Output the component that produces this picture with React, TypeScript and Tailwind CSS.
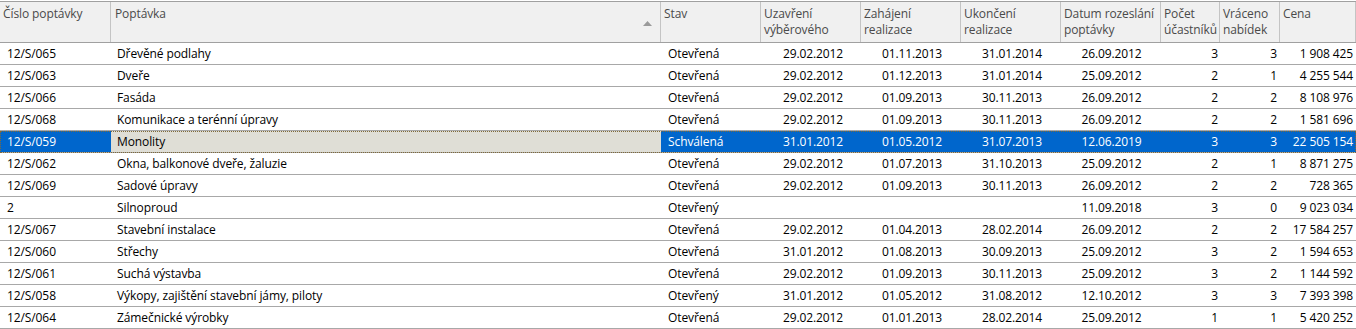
const COLS = [
  { title: ['Číslo poptávky'], w: 'w-[111px]' },
  { title: ['Poptávka'], w: 'w-[550px]', sort: true },
  { title: ['Stav'], w: 'w-[100px]' },
  { title: ['Uzavření', 'výběrového'], w: 'w-[100px]' },
  { title: ['Zahájení', 'realizace'], w: 'w-[100px]' },
  { title: ['Ukončení', 'realizace'], w: 'w-[100px]' },
  { title: ['Datum rozeslání', 'poptávky'], w: 'w-[100px]' },
  { title: ['Počet', 'účastníků'], w: 'w-[59px]' },
  { title: ['Vráceno', 'nabídek'], w: 'w-[60px]' },
  { title: ['Cena'], w: 'w-[76px]' },
];

type Row = [string, string, string, string, string, string, string, string, string, string];

const ROWS: Row[] = [
  ['12/S/065', 'Dřevěné podlahy', 'Otevřená', '29.02.2012', '01.11.2013', '31.01.2014', '26.09.2012', '3', '3', '1 908 425'],
  ['12/S/063', 'Dveře', 'Otevřená', '29.02.2012', '01.12.2013', '31.01.2014', '25.09.2012', '2', '1', '4 255 544'],
  ['12/S/066', 'Fasáda', 'Otevřená', '29.02.2012', '01.09.2013', '30.11.2013', '26.09.2012', '2', '2', '8 108 976'],
  ['12/S/068', 'Komunikace a terénní úpravy', 'Otevřená', '29.02.2012', '01.09.2013', '30.11.2013', '26.09.2012', '2', '2', '1 581 696'],
  ['12/S/059', 'Monolity', 'Schválená', '31.01.2012', '01.05.2012', '31.07.2013', '12.06.2019', '3', '3', '22 505 154'],
  ['12/S/062', 'Okna, balkonové dveře, žaluzie', 'Otevřená', '29.02.2012', '01.07.2013', '31.10.2013', '25.09.2012', '2', '1', '8 871 275'],
  ['12/S/069', 'Sadové úpravy', 'Otevřená', '29.02.2012', '01.09.2013', '30.11.2013', '26.09.2012', '2', '2', '728 365'],
  ['2', 'Silnoproud', 'Otevřený', '', '', '', '11.09.2018', '3', '0', '9 023 034'],
  ['12/S/067', 'Stavební instalace', 'Otevřená', '29.02.2012', '01.04.2013', '28.02.2014', '26.09.2012', '2', '2', '17 584 257'],
  ['12/S/060', 'Střechy', 'Otevřená', '31.01.2012', '01.08.2013', '30.09.2013', '25.09.2012', '3', '2', '1 594 653'],
  ['12/S/061', 'Suchá výstavba', 'Otevřená', '29.02.2012', '01.09.2013', '30.11.2013', '25.09.2012', '3', '2', '1 144 592'],
  ['12/S/058', 'Výkopy, zajištění stavební jámy, piloty', 'Otevřený', '31.01.2012', '01.05.2012', '31.08.2012', '12.10.2012', '3', '3', '7 393 398'],
  ['12/S/064', 'Zámečnické výrobky', 'Otevřená', '29.02.2012', '01.01.2013', '28.02.2014', '25.09.2012', '1', '1', '5 420 252'],
];

const SELECTED = 4;

// alignment + padding per column
const CELL = [
  'pl-[7px]',
  'pl-[6px]',
  'pl-[7px]',
  'justify-center pl-[4px]',
  'justify-center pl-[2px]',
  'justify-center pl-[2px]',
  'justify-center pl-[1px]',
  'justify-end pr-[2px]',
  'justify-end pr-[3px]',
  'justify-end pr-[3px]',
];

function SortArrow() {
  return (
    <svg width="9" height="5" viewBox="0 0 9 5" className="absolute right-[8px] top-[19px]">
      <path d="M0 5 L4.5 0 L9 5 Z" fill="#9a9a9a" />
    </svg>
  );
}

export default function App() {
  return (
    <div className="w-[1356px] h-[329px] bg-white pt-px overflow-hidden font-['Open_Sans',sans-serif] text-[12px] tracking-[-0.1px]">
      <div className="flex h-[42px] border-t border-b border-[#a0a0a0] bg-[#f0f0f0] text-[#4a4a4a]">
        {COLS.map((c, i) => (
          <div
            key={i}
            className={`${c.w} relative shrink-0 border-r border-[#c4c4c4] pl-[3px] pt-[4px] leading-[16px] ${i === 9 ? 'border-[#a0a0a0]' : ''} ${i === 1 ? 'pl-[4px]' : ''}`}
          >
            {c.title.map((t) => (
              <div key={t} className="whitespace-nowrap">{t}</div>
            ))}
            {c.sort && <SortArrow />}
          </div>
        ))}
      </div>
      {ROWS.map((r, ri) => {
        const sel = ri === SELECTED;
        return (
          <div
            key={ri}
            className={`flex h-[22px] border-b border-[#a8a8a8] ${sel ? 'outline-1 outline-dotted outline-[#7f6a3a] -outline-offset-1 bg-[#0066cc] text-white' : 'text-black'}`}
          >
            {r.map((v, ci) => (
              <div
                key={ci}
                className={`${COLS[ci].w} shrink-0 flex items-center whitespace-nowrap ${CELL[ci]} ${sel && ci === 1 ? 'bg-[#dfded6] text-black' : ''}`}
              >
                {v}
              </div>
            ))}
          </div>
        );
      })}
    </div>
  );
}
